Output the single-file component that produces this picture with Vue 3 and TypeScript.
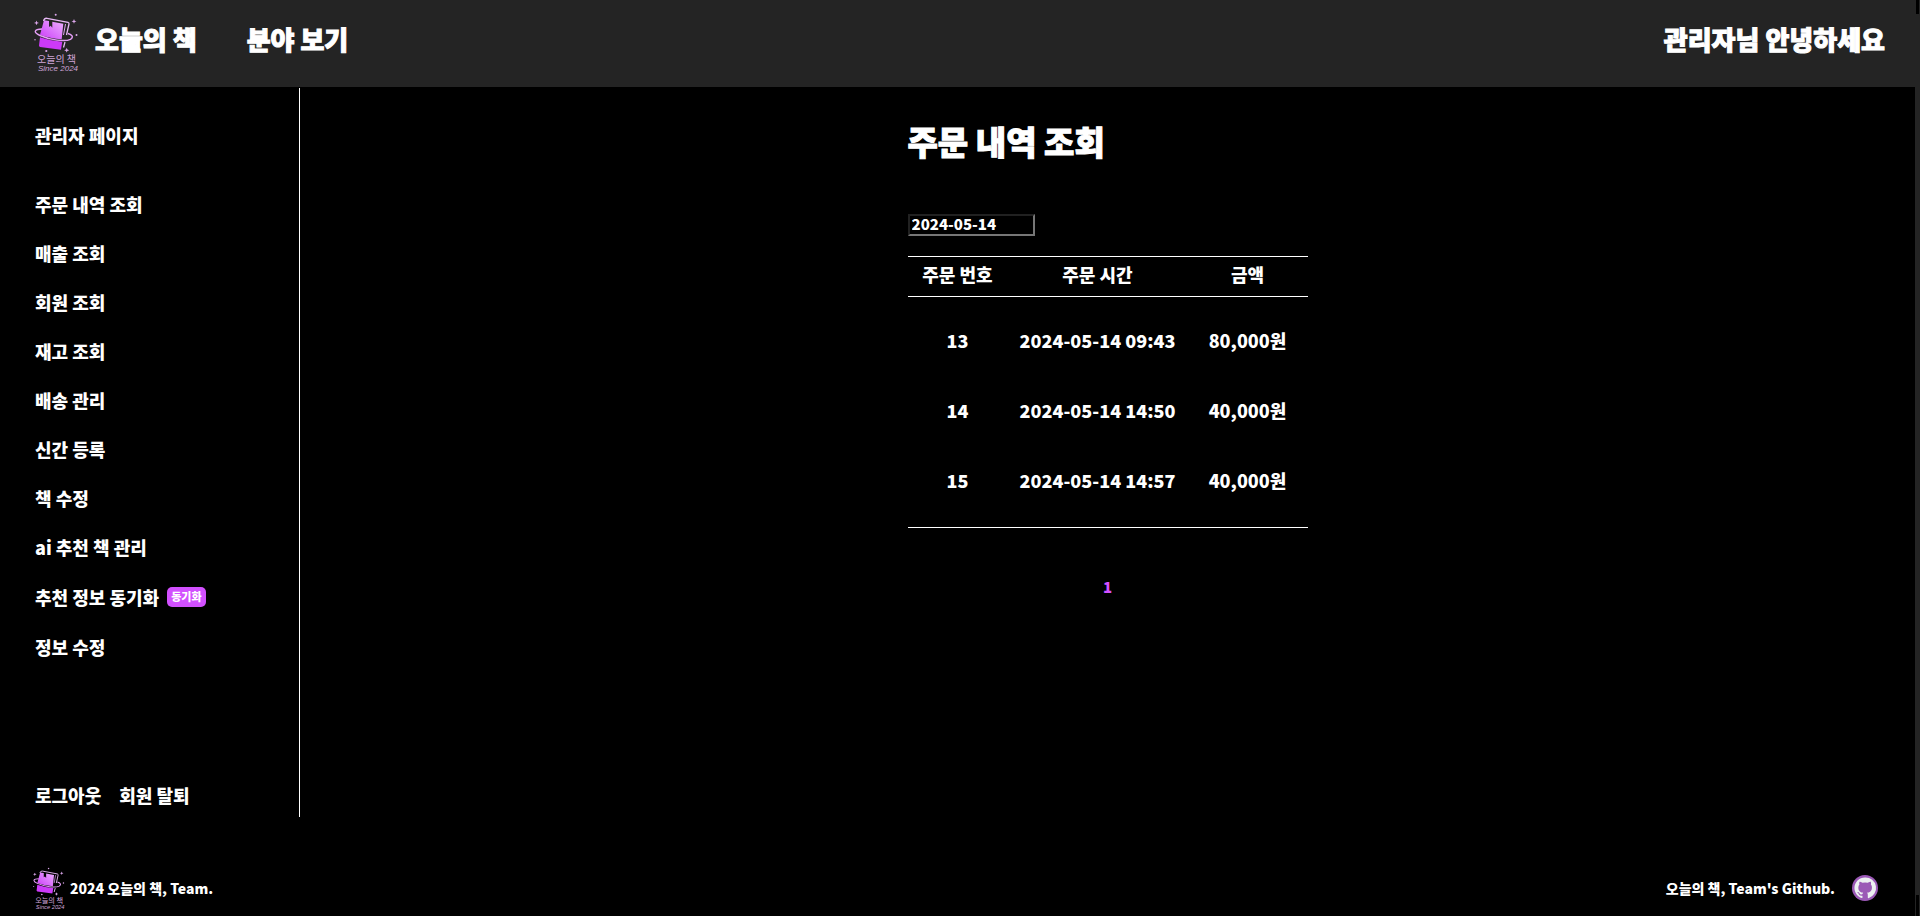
<script setup lang="ts">
import { ref } from 'vue'

interface Order {
  id: number
  time: string
  price: string
}

const menu: string[] = [
  '주문 내역 조회',
  '매출 조회',
  '회원 조회',
  '재고 조회',
  '배송 관리',
  '신간 등록',
  '책 수정',
  'ai 추천 책 관리',
  '추천 정보 동기화',
  '정보 수정',
]

const orders: Order[] = [
  { id: 13, time: '2024-05-14 09:43', price: '80,000원' },
  { id: 14, time: '2024-05-14 14:50', price: '40,000원' },
  { id: 15, time: '2024-05-14 14:57', price: '40,000원' },
]

const date = ref('2024-05-14')
</script>

<template>
  <div class="page">
    <svg class="defs" width="0" height="0" aria-hidden="true">
      <defs>
        <linearGradient id="cover" x1="1" y1="0" x2="0" y2="1">
          <stop offset="0" stop-color="#edb0ff" />
          <stop offset="1" stop-color="#cb3cf8" />
        </linearGradient>
        <symbol id="logo" viewBox="0 0 46 62">
          <path d="M10 7.300 L15 8 V14 L16.700 12.800 L18.300 14.800 V8.800 L29.300 10.700 L27.700 26.300 Q16 25.500 6 21.800Z" fill="url(#cover)" />
          <path d="M6 24.300 Q17 28.300 28.300 28.800 L27 36.700 L6 33.900 Q4.900 33.500 5 32.500Z" fill="#cc3af8" />
          <path d="M9.500 8 Q10.500 4.800 13 5.300 L34 9.300 Q35.300 9.700 35 11 L32.500 22 M31 29 L29.500 34.500" fill="none" stroke="#e8b8f6" stroke-width="1.300" />
          <path d="M31.500 11 L29.500 22" fill="none" stroke="#e0a4f2" stroke-width="1" />
          <path d="M8 16 C0 16 -1 19.500 6 22.500 C16 27 31 29 36.500 26.300 C40 24 38 21.500 34 20.500" fill="none" stroke="#e39df5" stroke-width="1.400" />
          <g fill="#dba6ea">
            <circle cx="21.700" cy="1.700" r="1" />
            <circle cx="42.500" cy="22" r="1" />
            <circle cx="1" cy="26.700" r=".7" />
            <circle cx="12.300" cy="38" r="1.100" />
            <path d="M2.500 7.500l.7 1.700 1.800.7-1.800.7-.7 1.700-.7-1.700L0 9.900l1.800-.7zM40 6l.7 1.700 1.800.7-1.800.7-.7 1.700-.7-1.700-1.800-.7 1.800-.7zM32.700 34.800l.7 1.700 1.800.7-1.800.7-.7 1.700-.7-1.700-1.800-.7 1.800-.7z" />
          </g>
          <text x="3" y="50" class="logo-ko">오늘의 책</text>
          <text x="4" y="58" class="logo-en">Since 2024</text>
        </symbol>
      </defs>
    </svg>

    <header class="top">
      <nav class="top-nav">
        <a href="#" class="brand">
          <svg class="logo" viewBox="0 0 46 62" aria-hidden="true"><use href="#logo" /></svg>
          <span class="label">오늘의 책</span>
        </a>
        <a href="#" class="label">분야 보기</a>
      </nav>
      <span class="label">관리자님 안녕하세요</span>
    </header>

    <div class="body">
      <aside class="side">
        <h2 class="side-title">관리자 페이지</h2>
        <ul class="menu">
          <li v-for="item in menu" :key="item">
            <a href="#">{{ item }}</a>
            <button v-if="item === '추천 정보 동기화'" type="button" class="sync">동기화</button>
          </li>
        </ul>
        <div class="account">
          <a href="#">로그아웃</a>
          <a href="#">회원 탈퇴</a>
        </div>
      </aside>

      <main class="main">
        <section class="orders">
          <h1>주문 내역 조회</h1>
          <input v-model="date" class="date" type="text" aria-label="조회 날짜" />
          <table>
            <colgroup>
              <col class="c-id" />
              <col class="c-time" />
              <col class="c-price" />
            </colgroup>
            <thead>
              <tr>
                <th>주문 번호</th>
                <th>주문 시간</th>
                <th>금액</th>
              </tr>
            </thead>
            <tbody>
              <tr v-for="order in orders" :key="order.id">
                <td>{{ order.id }}</td>
                <td>{{ order.time }}</td>
                <td>{{ order.price }}</td>
              </tr>
            </tbody>
          </table>
          <nav class="pager" aria-label="페이지">
            <button type="button" aria-current="page">1</button>
          </nav>
        </section>
      </main>
    </div>

    <footer class="foot">
      <div class="foot-item">
        <svg class="logo small" viewBox="0 0 46 62" aria-hidden="true"><use href="#logo" /></svg>
        <span>2024 오늘의 책, Team.</span>
      </div>
      <a href="#" class="foot-item git">
        <span>오늘의 책, Team's Github.</span>
        <svg class="github" viewBox="0 0 26 26" aria-hidden="true">
          <circle cx="13" cy="13" r="13" fill="#9b59b6" />
          <path transform="translate(2 2) scale(.92)" fill="#ecf0f1" d="M12 .5C5.600.5.5 5.600.5 12c0 5.100 3.300 9.400 7.900 10.900.6.1.8-.2.8-.6v-2c-3.200.7-3.900-1.500-3.900-1.500-.5-1.300-1.300-1.700-1.300-1.700-1-.7.100-.7.100-.7 1.200.1 1.800 1.200 1.800 1.200 1 1.800 2.700 1.300 3.400 1 .1-.8.400-1.300.7-1.600-2.600-.3-5.300-1.300-5.300-5.700 0-1.300.5-2.300 1.200-3.100-.1-.3-.5-1.500.1-3.100 0 0 1-.3 3.200 1.200a11 11 0 0 1 5.800 0c2.200-1.500 3.200-1.200 3.200-1.200.6 1.600.2 2.800.1 3.100.7.800 1.200 1.800 1.200 3.100 0 4.400-2.700 5.400-5.300 5.700.4.400.8 1.100.8 2.200v3.200c0 .3.200.7.800.6A11.500 11.500 0 0 0 12 .5z" />
        </svg>
      </a>
    </footer>

    <div class="track" aria-hidden="true"></div>
  </div>
</template>

<style>
html {
  background: #000;
}
</style>

<style scoped>
.page {
  display: flex;
  flex-direction: column;
  min-height: 100vh;
  box-sizing: border-box;
  padding-right: 5px;
  background: #000;
  color: #fff;
  font-family: "Noto Sans CJK KR", sans-serif;
  font-size: 18px;
  font-weight: 900;
  line-height: 24px;
}

.defs {
  position: absolute;
}

/* Scroll track along the window's right edge, with its two end caps */
.track {
  position: fixed;
  top: 0;
  right: 0;
  bottom: 0;
  display: flex;
  flex-direction: column;
  justify-content: space-between;
  width: 5px;
  padding: 0 1px;
  box-sizing: border-box;
  background: #242424;
}

.track::before,
.track::after {
  content: "";
  height: 14px;
  background: #000;
}

.track::after {
  height: 21px;
}

a {
  color: inherit;
  text-decoration: none;
}

button,
input {
  font: inherit;
}

.top {
  display: flex;
  align-items: center;
  justify-content: space-between;
  height: 87px;
  padding: 0 30px 0 34px;
  box-sizing: border-box;
  background: #242424;
  font-size: 26px;
  line-height: 40px;
}

.label {
  padding-bottom: 10px;
  -webkit-text-stroke: 1px #fff;
}

.top-nav {
  display: flex;
  align-items: center;
  gap: 50px;
}

.brand {
  display: flex;
  align-items: center;
  gap: 15px;
}

.logo {
  width: 46px;
  height: 62px;
}

.logo-ko {
  fill: #cfa5d8;
  font-family: "Noto Sans CJK KR", sans-serif;
  font-size: 10px;
  font-weight: 400;
}

.logo-en {
  fill: #cfa5d8;
  font-family: "Liberation Sans", sans-serif;
  font-size: 8px;
  font-style: italic;
  font-weight: 400;
}

.body {
  display: flex;
  margin-top: 1px;
}

.side {
  display: flex;
  flex-direction: column;
  width: 300px;
  height: 729px;
  padding: 35px 0 10px 35px;
  box-sizing: border-box;
  border-right: 1px solid #fff;
}

.side-title {
  margin: 0 0 45px;
  font-size: inherit;
  font-weight: inherit;
}

.menu {
  display: flex;
  flex-direction: column;
  gap: 25px;
  margin: 0;
  padding: 0;
  list-style: none;
}

.menu li {
  display: flex;
  align-items: center;
  gap: 8px;
}

.sync {
  margin: 3px 0;
  padding: 0 4px 2px;
  border: 0;
  border-radius: 5px;
  background: #d250ff;
  color: #fff;
  font-size: 11px;
  line-height: 18px;
}

.account {
  display: flex;
  gap: 18px;
  margin-top: auto;
}

.main {
  display: flex;
  flex: 1;
  justify-content: center;
}

.orders {
  width: 400px;
  padding-top: 29px;
}

h1 {
  margin: 0 0 49px;
  font-size: 33px;
  font-weight: inherit;
  line-height: 48px;
  -webkit-text-stroke: 1px #fff;
}

.date {
  display: block;
  width: 127px;
  height: 22px;
  margin-bottom: 20px;
  padding: 0 2px 2px;
  box-sizing: border-box;
  border: 2px inset #767676;
  background: #000;
  color: #fff;
  font-size: 15px;
}

table {
  width: 100%;
  border-collapse: collapse;
  border-top: 1px solid #fff;
  border-bottom: 1px solid #fff;
  table-layout: fixed;
  text-align: center;
}

.c-id {
  width: 100px;
}

.c-time {
  width: 180px;
}

th {
  height: 40px;
  padding: 0 0 6px;
  box-sizing: border-box;
  font-weight: 900;
}

thead {
  border-bottom: 1px solid #fff;
}

td {
  height: 70px;
  padding: 0 0 4px;
  box-sizing: border-box;
}

tbody::before,
tbody::after {
  content: "";
  display: table-row;
  height: 10px;
}

tbody::after {
  height: 11px;
}

.pager {
  margin-top: 45px;
  text-align: center;
}

.pager button {
  padding: 0;
  border: 0;
  background: none;
  color: #d250ff;
  font-size: 15px;
}

.foot {
  display: flex;
  align-items: center;
  justify-content: space-between;
  margin-top: 50px;
  padding: 0 37px 0 33px;
  font-size: 14px;
}

.foot-item {
  display: flex;
  align-items: center;
  gap: 4px;
}

.foot-item span {
  padding-bottom: 3px;
}

.git {
  gap: 17px;
  padding-bottom: 3px;
}

.git span {
  padding-bottom: 1px;
}

.small {
  width: 33px;
  height: 45px;
}

.github {
  width: 26px;
  height: 26px;
}
</style>
